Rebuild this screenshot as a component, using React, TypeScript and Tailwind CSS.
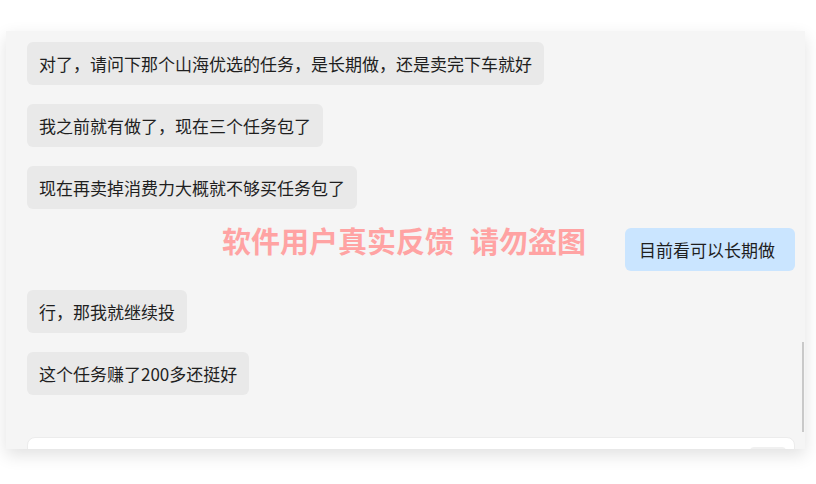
const messages: { text: string; mine?: boolean }[] = [
  { text: "对了，请问下那个山海优选的任务，是长期做，还是卖完下车就好" },
  { text: "我之前就有做了，现在三个任务包了" },
  { text: "现在再卖掉消费力大概就不够买任务包了" },
  { text: "目前看可以长期做", mine: true },
  { text: "行，那我就继续投" },
  { text: "这个任务赚了200多还挺好" },
];

function Bubble({ text, mine }: { text: string; mine?: boolean }) {
  if (mine) {
    return (
      <div className="flex justify-end">
        <div className="rounded-md bg-[#cae5ff] py-[10px] pl-[14px] pr-[20px] text-[17px] leading-[23px] text-[#1f1f1f]">
          {text}
        </div>
      </div>
    );
  }
  return (
    <div className="flex justify-start">
      <div className="rounded-md bg-[#e9e9e9] px-3 py-[10px] text-[17px] leading-[23px] text-[#1f1f1f]">
        {text}
      </div>
    </div>
  );
}

export default function App() {
  return (
    <div
      className="relative h-[484px] w-[816px] overflow-hidden bg-white pl-[6px] pt-[31px]"
      style={{ fontFamily: '"Noto Sans CJK SC", "Noto Sans", sans-serif' }}
    >
      <div className="relative h-[418px] w-[799px] overflow-hidden bg-[#f5f5f5] shadow-[0_6px_16px_rgba(0,0,0,0.12)]">
        <div className="flex flex-col gap-[19px] pl-[21px] pr-[10px] pt-[11px]">
          {messages.map((m, i) => (
            <Bubble key={i} text={m.text} mine={m.mine} />
          ))}
        </div>

        {/* input box, cut off by the panel */}
        <div className="ml-[21px] mt-[42px] flex h-[40px] w-[768px] justify-end rounded-lg border border-[#ececec] bg-white pr-[8px] pt-[9px]">
          <div className="h-[24px] w-[36px] rounded bg-[#f0f0f0]" />
        </div>

        {/* scrollbar */}
        <div className="absolute right-[1px] top-[311px] h-[90px] w-[2px] bg-[#c9c9c9]" />
      </div>

      {/* watermark */}
      <div className="pointer-events-none absolute left-[222px] top-[222px] flex text-[29px] font-bold leading-[36px] text-[#ffa3a3]">
        <span>软件用户真实反馈</span>
        <span className="ml-[16px]">请勿盗图</span>
      </div>
    </div>
  );
}
